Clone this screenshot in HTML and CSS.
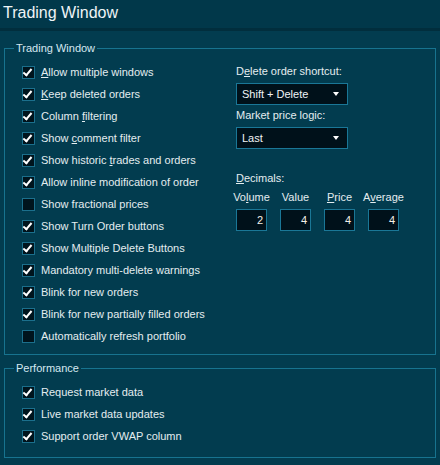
FILE: index.html
```html
<!DOCTYPE html>
<html>
<head>
<meta charset="utf-8">
<link rel="stylesheet" href="styles.css">
</head>
<body>
<div class="header">Trading Window</div>

<fieldset class="group group-main">
  <legend>Trading Window</legend>
  <div class="group-body">
    <div class="col-checks">
      <div class="row"><span class="cb on"></span><span><u>A</u>llow multiple windows</span></div>
      <div class="row"><span class="cb on"></span><span><u>K</u>eep deleted orders</span></div>
      <div class="row"><span class="cb on"></span><span>Column <u>f</u>iltering</span></div>
      <div class="row"><span class="cb on"></span><span>Show <u>c</u>omment filter</span></div>
      <div class="row"><span class="cb on"></span><span>Show historic <u>t</u>rades and orders</span></div>
      <div class="row"><span class="cb on"></span><span>Allow inline modification of order</span></div>
      <div class="row"><span class="cb"></span><span>Show fractional prices</span></div>
      <div class="row"><span class="cb on"></span><span>Show Turn Order buttons</span></div>
      <div class="row"><span class="cb on"></span><span>Show Multiple Delete Buttons</span></div>
      <div class="row"><span class="cb on"></span><span>Mandatory multi-delete warnings</span></div>
      <div class="row"><span class="cb on"></span><span>Blink for new orders</span></div>
      <div class="row"><span class="cb on"></span><span>Blink for new partially filled orders</span></div>
      <div class="row"><span class="cb"></span><span>Automatically refresh portfolio</span></div>
    </div>
    <div class="col-right">
      <div class="label">D<u>e</u>lete order shortcut:</div>
      <div class="select"><span>Shift + Delete</span><span class="arrow"></span></div>
      <div class="label">Market price lo<u>g</u>ic:</div>
      <div class="select"><span>Last</span><span class="arrow"></span></div>
      <div class="label dec-title"><u>D</u>ecimals:</div>
      <div class="decimals">
        <div class="dec"><div class="dec-label">Vo<u>l</u>ume</div><div class="num">2</div></div>
        <div class="dec"><div class="dec-label">Value</div><div class="num">4</div></div>
        <div class="dec"><div class="dec-label"><u>P</u>rice</div><div class="num">4</div></div>
        <div class="dec"><div class="dec-label">A<u>v</u>erage</div><div class="num">4</div></div>
      </div>
    </div>
  </div>
</fieldset>

<fieldset class="group group-perf">
  <legend>Performance</legend>
  <div class="group-body perf-body">
    <div class="col-checks">
      <div class="row"><span class="cb on"></span><span>Request market data</span></div>
      <div class="row"><span class="cb on"></span><span>Live market data updates</span></div>
      <div class="row"><span class="cb on"></span><span>Support order VWAP column</span></div>
    </div>
  </div>
</fieldset>
</body>
</html>
```

FILE: styles.css
```css
html, body {
  margin: 0;
  padding: 0;
  background: #023c4f;
  width: 440px;
  height: 465px;
  overflow: hidden;
}

body {
  font-family: "Liberation Sans", Arial, sans-serif;
  font-size: 11px;
  color: #e4edf0;
}

.header {
  height: 28px;
  line-height: 26px;
  padding-left: 3px;
  font-size: 16px;
  color: #eef4f6;
  background: #01384a;
  border-bottom: 3px solid #012e3d;
}

.group {
  margin: 0 4px;
  padding: 0;
  border: 1px solid #17738f;
  min-width: 0;
}

.group-main {
  margin-top: 10px;
}

.group-perf {
  margin-top: 6px;
}

.group legend {
  margin-left: 9px;
  padding: 0 2px;
  font-size: 11px;
  line-height: 14px;
  color: #d6e8f1;
}

.group-body {
  display: flex;
  padding: 6px 0 7px 17px;
}

.perf-body {
  padding-bottom: 10px;
}

.col-checks {
  width: 214px;
  display: flex;
  flex-direction: column;
}

.row {
  height: 22px;
  display: flex;
  align-items: center;
  gap: 6px;
  white-space: nowrap;
}

.cb {
  width: 11px;
  height: 11px;
  flex: none;
  background: #00141d;
  border: 1px solid #1b6f8c;
  position: relative;
}

.cb.on::after {
  content: "";
  position: absolute;
  left: 2px;
  top: 0px;
  width: 3px;
  height: 7px;
  border-right: 2px solid #ffffff;
  border-bottom: 2px solid #ffffff;
  transform: rotate(40deg);
  transform-origin: center;
}

.col-right {
  display: flex;
  flex-direction: column;
  align-items: flex-start;
}

.label {
  line-height: 20px;
  height: 20px;
  white-space: nowrap;
}

.select {
  margin-top: 2px;
  width: 110px;
  height: 20px;
  background: #00111a;
  border: 1px solid #1a7797;
  display: flex;
  align-items: center;
  justify-content: space-between;
  padding: 0 8px 0 5px;
  box-sizing: content-box;
  width: 97px;
  color: #f0f4f6;
}

.arrow {
  width: 0;
  height: 0;
  border-left: 3.5px solid transparent;
  border-right: 3.5px solid transparent;
  border-top: 4px solid #ffffff;
}

.dec-title {
  margin-top: 21px;
  height: 16px;
  line-height: 16px;
}

.decimals {
  display: flex;
  gap: 13px;
  margin-top: 3px;
}

.dec {
  width: 31px;
  display: flex;
  flex-direction: column;
  align-items: center;
}

.dec-label {
  height: 16px;
  line-height: 16px;
  white-space: nowrap;
}

.num {
  margin-top: 4px;
  width: 29px;
  height: 20px;
  line-height: 20px;
  background: #00111a;
  border: 1px solid #1a7797;
  text-align: right;
  padding-right: 0;
  box-sizing: content-box;
  color: #f4f0e8;
}

.num {
  width: 26px;
  padding-right: 3px;
}
```
